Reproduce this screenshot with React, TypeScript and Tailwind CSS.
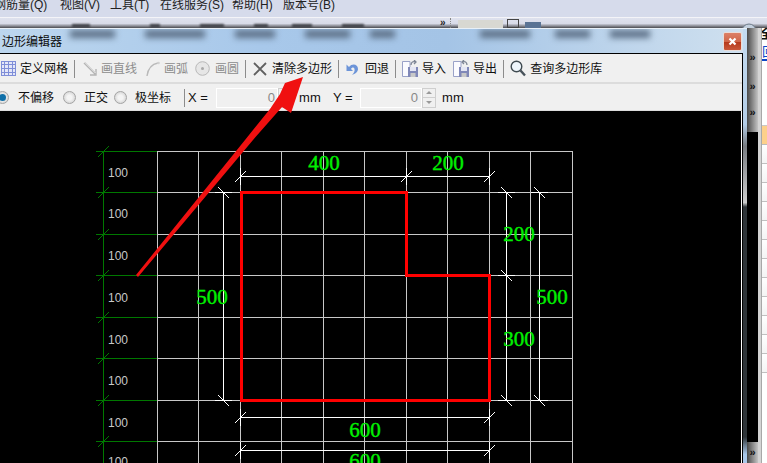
const cjk = "font-['Liberation_Sans','Noto_Sans_CJK_SC',sans-serif]"

const Sep = ({ className }: { className: string }) => <div className={`w-px h-[18px] bg-[#8c8c8c] ${className}`} />

const GridIcon = () => (
    <svg width="15" height="15" viewBox="0 0 15 15" className="shrink-0" shapeRendering="crispEdges">
        <rect x="0" y="0" width="15" height="15" fill="#e4e7f8" />
        {[0.5, 3.5, 7.5, 11.5, 14.5].map((p) => (
            <g key={p} stroke="#7f8ed8">
                <line x1={p} y1="0" x2={p} y2="15" />
                <line x1="0" y1={p} x2="15" y2={p} />
            </g>
        ))}
    </svg>
)

const LineIcon = () => (
    <svg width="14" height="16" viewBox="0 0 14 16" className="shrink-0 ml-[8px]">
        <path d="M1 2 L12 13 M7 14 H13 V8" fill="none" stroke="#b4b4b4" strokeWidth="1.4" />
        <path d="M2 1 L13 12" stroke="#d8d8d8" strokeWidth="1" />
    </svg>
)

const ArcIcon = () => (
    <svg width="14" height="16" viewBox="0 0 14 16" className="shrink-0 ml-[9px]">
        <path d="M1 15 C2 8 6 3 12 2" fill="none" stroke="#b9b9b9" strokeWidth="1.4" />
        <circle cx="12.5" cy="2" r="1.3" fill="#d0d0d0" />
    </svg>
)

const CircleIcon = () => (
    <svg width="15" height="15" viewBox="0 0 15 15" className="shrink-0 ml-[7px]">
        <circle cx="7.5" cy="7.5" r="6.8" fill="#e6e6e6" stroke="#b8b8b8" />
        <circle cx="7.5" cy="7.5" r="1.5" fill="#a8a8a8" />
    </svg>
)

const CrossIcon = () => (
    <svg width="14" height="14" viewBox="0 0 14 14" className="shrink-0 ml-[7px]">
        <path d="M1 1 L13 13 M13 1 L1 13" stroke="#606060" strokeWidth="1.8" />
    </svg>
)

const UndoIcon = () => (
    <svg width="13" height="14" viewBox="0 0 13 14" className="shrink-0 ml-[7px]">
        <path d="M3 5 C6 1 12 2 12 7 C12 10 9 12 6 13 C8 11 9 9 8.5 7 C8 5 6 5 5 7 L7 9 L0.5 9 L0.5 2.5 Z" fill="#6c94d8" />
    </svg>
)

const DiskIcon = ({ className, arrow }: { className: string; arrow: string }) => (
    <svg width="16" height="17" viewBox="0 0 16 17" className={`shrink-0 ${className}`}>
        <path d="M0.5 1.5 H8 L8 16.5 H0.5 Z" fill="#fbfbff" stroke="#9aa2c8" />
        <rect x="6" y="7" width="10" height="10" fill="#8088b8" />
        <rect x="8" y="7" width="6" height="4" fill="#e4e6f4" />
        <rect x="8.5" y="13" width="5" height="4" fill="#c8c8c8" />
        <path d={arrow} fill="none" stroke="#7c8494" strokeWidth="1.3" />
    </svg>
)

const SearchIcon = () => (
    <svg width="16" height="17" viewBox="0 0 16 17" className="shrink-0 ml-[6px]">
        <circle cx="6.5" cy="6.5" r="5.3" fill="#eef5fb" stroke="#3f4a50" strokeWidth="1.4" />
        <path d="M10.5 10.5 L15 15.5" stroke="#47525a" strokeWidth="2.4" />
    </svg>
)

const Radio = ({ className, on }: { className: string; on?: boolean }) => (
    <div className={`w-[13px] h-[13px] shrink-0 rounded-full border border-[#a4a4a4] flex items-center justify-center bg-[radial-gradient(circle,#f4f4f4_30%,#c8c8c8_100%)] ${className}`}>
        {on && <div className="w-[7px] h-[7px] rounded-full bg-[#0f6fa8]" />}
    </div>
)

const Spin = () => (
    <div className="w-[14px] h-[20px] shrink-0 flex flex-col border border-[#cfcfcf] bg-[#f0f0f0]">
        <div className="flex-1 flex items-center justify-center border-b border-[#cfcfcf]">
            <div className="border-x-[3px] border-x-transparent border-b-[3px] border-b-[#9a9a9a]" />
        </div>
        <div className="flex-1 flex items-center justify-center">
            <div className="border-x-[3px] border-x-transparent border-t-[3px] border-t-[#9a9a9a]" />
        </div>
    </div>
)

const gridX = [157, 198, 240, 281, 323, 364, 406, 447, 489, 530, 572]
const gridY = [151, 192, 234, 275, 317, 358, 400, 441]
const rowLabels = [177, 218, 260, 302, 344, 385, 427, 466]

const dimLabels = [
    { t: '400', x: 324, y: 170 },
    { t: '200', x: 448, y: 170 },
    { t: '200', x: 519, y: 241 },
    { t: '500', x: 212, y: 304 },
    { t: '500', x: 552, y: 304 },
    { t: '300', x: 519, y: 346 },
    { t: '600', x: 365, y: 437 },
    { t: '600', x: 365, y: 468 },
]

const slashTicks = [[240, 176], [406, 176], [489, 176], [240, 417], [489, 417], [240, 450], [489, 450]]
const backTicks = [[223, 192], [223, 400], [506, 192], [506, 275], [506, 400], [539, 192], [539, 400]]

const Canvas = () => (
    <svg width="741" height="352" viewBox="0 111 741 352" className="block bg-black">
        <g shapeRendering="crispEdges" strokeWidth="1">
            {gridX.map((x) => <line key={x} x1={x + 0.5} y1="151" x2={x + 0.5} y2="463" stroke="#c8c8c8" />)}
            {gridY.map((y) => (
                <g key={y}>
                    <line x1="157" y1={y + 0.5} x2="573" y2={y + 0.5} stroke="#c8c8c8" />
                    <line x1="96" y1={y + 0.5} x2="157" y2={y + 0.5} stroke="#007800" />
                </g>
            ))}
            <line x1="103.5" y1="151" x2="103.5" y2="463" stroke="#007800" />
            <line x1="223.5" y1="192" x2="223.5" y2="400" stroke="#fff" />
            <line x1="506.5" y1="192" x2="506.5" y2="400" stroke="#fff" />
            <line x1="539.5" y1="192" x2="539.5" y2="400" stroke="#fff" />
            <line x1="240" y1="176.5" x2="489" y2="176.5" stroke="#fff" />
            <line x1="240" y1="417.5" x2="489" y2="417.5" stroke="#fff" />
            <line x1="240" y1="450.5" x2="489" y2="450.5" stroke="#fff" />
            {backTicks.map(([x, y]) => <line key={`${x}-${y}`} x1={x - 8} y1={y + 0.5} x2={x + 9} y2={y + 0.5} stroke="#fff" />)}
            {slashTicks.map(([x, y]) => <line key={`${x}-${y}`} x1={x + 0.5} y1={y - 8} x2={x + 0.5} y2={y + 9} stroke="#fff" />)}
        </g>
        {gridY.map((y) => <line key={y} x1="98" y1={y + 6} x2="109" y2={y - 5} stroke="#007800" />)}
        {slashTicks.map(([x, y]) => <line key={`${x}-${y}`} x1={x - 5} y1={y + 6} x2={x + 6} y2={y - 5} stroke="#fff" />)}
        {backTicks.map(([x, y]) => <line key={`${x}-${y}`} x1={x - 5} y1={y - 5} x2={x + 6} y2={y + 6} stroke="#fff" />)}
        <path d="M241 192.5 H406.5 V275 H489.5 V400.5 H241 Z" fill="none" stroke="#ff0000" strokeWidth="3" shapeRendering="crispEdges" />
        {rowLabels.map((y) => (
            <text key={y} x="108" y={y} className="font-['Liberation_Sans',sans-serif] text-[12px] fill-[#c8c8c8]">100</text>
        ))}
        {dimLabels.map((d) => (
            <text key={`${d.t}-${d.x}-${d.y}`} x={d.x} y={d.y} textAnchor="middle" className="font-['Liberation_Serif',serif] text-[21px] fill-[#00f000] stroke-[#00f000] stroke-[0.4px]">{d.t}</text>
        ))}
    </svg>
)

const blobs = [
    'w-[45px] ml-[70px]', 'w-[60px] ml-[30px]', 'w-[40px] ml-[30px]', 'w-[45px] ml-[30px]',
    'w-[25px] ml-[20px]', 'w-[50px] ml-[85px]', 'w-[35px] ml-[25px]', 'w-[40px] ml-[20px]',
]

const stripBits = [
    'w-[18px] ml-[72px]', 'w-[10px] ml-[60px]', 'w-[24px] ml-[40px]', 'w-[14px] ml-[30px]',
    'w-[20px] ml-[24px]', 'w-[22px] ml-[30px]',
]

const SideButton = ({ className }: { className: string }) => (
    <div className={`bg-[linear-gradient(90deg,#4a4a4a,#c4c4c4)] flex justify-center ${className}`}>»</div>
)

export default function App() {
    return (
        <div className={`relative w-[767px] h-[463px] overflow-hidden bg-[#d6dbeb] text-[12px] text-[#111] ${cjk}`}>
            {/* menu bar, cut off at the top of the shot */}
            <div className="h-[17px] flex items-center overflow-hidden text-[12px] leading-none pb-[7px] text-[#222]">
                <span className="-ml-[6px] w-[66px] shrink-0">钢筋量(Q)</span>
                <span className="w-[50px] shrink-0">视图(V)</span>
                <span className="w-[50px] shrink-0">工具(T)</span>
                <span className="w-[72px] shrink-0">在线服务(S)</span>
                <span className="w-[51px] shrink-0">帮助(H)</span>
                <span className="shrink-0">版本号(B)</span>
            </div>
            <div className="relative h-[11px] border-t border-t-[#f4f4f8] bg-[linear-gradient(#dfe2ee_0%,#d8dbe8_55%,#4a4b50_100%)] flex items-end overflow-hidden">
                <div className="absolute left-0 bottom-0 flex blur-[1px]">
                    {stripBits.map((b) => <div key={b} className={`h-[4px] shrink-0 bg-[#44464c] ${b}`} />)}
                </div>
                <div className="ml-[440px] text-[10px] leading-[10px] font-bold text-[#222]">»</div>
                <div className="ml-[4px] w-[3px] h-[10px] border-l border-dotted border-[#888]" />
                <div className="ml-[5px] w-[45px] h-[8px] bg-[#d8d8d2]" />
                <div className="ml-[4px] w-[12px] h-[9px] border border-[#444]" />
                <div className="ml-[6px] w-[16px] h-[6px] bg-[#5a7394]" />
            </div>
            <svg width="16" height="16" className="absolute left-[741px] top-[23px]" viewBox="0 0 16 16">
                <circle cx="8" cy="8" r="7" fill="#c4d0de" stroke="#6d7a88" />
            </svg>

            <div className="relative flex h-[435px]">
                {/* dialog window */}
                <div className="w-[747px] shrink-0 flex flex-col pr-[4px] bg-[linear-gradient(#c4dcf2_0%,#b4cde6_22%,#777b80_27%,#cccccc_40%,#2e3438_41%,#2e3438_94%,#a9c8ea_98%)] border-t border-t-[#e8f0f8]">
                    <div className="relative h-[24px] shrink-0 overflow-hidden bg-[linear-gradient(90deg,#bcd6ee_0%,#a8c8ea_35%,#a4c4e6_60%,#cfe0ef_100%)]">
                        <div className="flex pt-[1px] blur-[3px]">
                            {blobs.map((b) => <div key={b} className={`h-[8px] shrink-0 bg-[#5d7188] ${b}`} />)}
                        </div>
                        <div className="absolute left-[2px] top-[5px] leading-[16px] text-[#0c0c0c]">边形编辑器</div>
                        <div className="absolute left-[723px] top-[3px] w-[19px] h-[19px] rounded-[2px] border border-[#e9dcd8] bg-[linear-gradient(#dd8067_0%,#d0674a_50%,#b63a1c_55%,#c9583a_100%)] flex items-center justify-center">
                            <svg width="9" height="9" viewBox="0 0 9 9">
                                <path d="M1.5 1.5 L7.5 7.5 M7.5 1.5 L1.5 7.5" stroke="#fff" strokeWidth="2.2" />
                            </svg>
                        </div>
                    </div>
                    <div className="flex-1 min-h-0 flex flex-col border-t border-r border-black">
                        <div className="h-[28px] shrink-0 bg-[#f0f0f0] flex items-center pl-[1px] pt-[1px]">
                            <GridIcon />
                            <span className="ml-[4px]">定义网格</span>
                            <Sep className="ml-[6px]" />
                            <LineIcon />
                            <span className="ml-[4px] text-[#8c8c8c]">画直线</span>
                            <ArcIcon />
                            <span className="ml-[4px] text-[#8c8c8c]">画弧</span>
                            <CircleIcon />
                            <span className="ml-[5px] text-[#8c8c8c]">画圆</span>
                            <Sep className="ml-[6px]" />
                            <CrossIcon />
                            <span className="ml-[5px]">清除多边形</span>
                            <Sep className="ml-[6px]" />
                            <UndoIcon />
                            <span className="ml-[6px]">回退</span>
                            <Sep className="ml-[6px]" />
                            <DiskIcon className="ml-[6px]" arrow="M9 5 C9 2 11 1 14 2 M12 0 L14 2 L12 4" />
                            <span className="ml-[4px]">导入</span>
                            <DiskIcon className="ml-[7px]" arrow="M14 5 C14 2 12 1 9 2 M11 0 L9 2 L11 4" />
                            <span className="ml-[4px]">导出</span>
                            <Sep className="ml-[6px]" />
                            <SearchIcon />
                            <span className="ml-[4px]">查询多边形库</span>
                        </div>
                        <div className="h-[2px] shrink-0 bg-[#dcdcdc]" />
                        <div className="h-[27px] shrink-0 bg-[#f0f0f0] flex items-center border-b border-[#dcdcdc] pt-[1px]">
                            <Radio className="-ml-[4px]" on />
                            <span className="ml-[9px]">不偏移</span>
                            <Radio className="ml-[9px]" />
                            <span className="ml-[8px]">正交</span>
                            <Radio className="ml-[6px]" />
                            <span className="ml-[8px]">极坐标</span>
                            <Sep className="ml-[13px]" />
                            <span className="ml-[3px] w-[20px] text-[13px]">X =</span>
                            <div className="ml-[8px] w-[62px] h-[20px] border border-white flex items-center justify-end pr-[2px] text-[13px] text-[#888]">0</div>
                            <Spin />
                            <span className="ml-[7px] w-[21px] text-[13px] whitespace-nowrap">mm</span>
                            <span className="ml-[13px] w-[20px] text-[13px]">Y =</span>
                            <div className="ml-[7px] w-[62px] h-[20px] border border-white flex items-center justify-end pr-[3px] text-[13px] text-[#888]">0</div>
                            <Spin />
                            <span className="ml-[6px] text-[13px]">mm</span>
                        </div>
                        <div className="flex-1 min-h-0 bg-black overflow-hidden border-r border-white">
                            <Canvas />
                        </div>
                    </div>
                </div>

                {/* docked panels behind the dialog */}
                <div className="flex-1 min-w-0 flex">
                    <div className="w-[11px] shrink-0 flex flex-col bg-black text-[11px] leading-none font-bold text-[#111]">
                        <SideButton className="h-[44px] items-end pb-[9px]" />
                        <SideButton className="h-[28px] items-center" />
                        <SideButton className="h-[32px] items-center pb-[8px]" />
                        <div className="flex-1" />
                        <SideButton className="h-[21px] items-center" />
                    </div>
                    <div className="w-[4px] shrink-0 bg-[#d4d4d4] border-r border-[#a8a8a8]" />
                    <div className="flex-1 min-w-0 overflow-hidden bg-white">
                        <div className="h-[16px] whitespace-nowrap text-[13px] leading-[12px] font-bold -ml-[2px]">全</div>
                        <div className="h-[17px] text-[13px] leading-[16px] text-[#0b46c8] whitespace-nowrap border-b-2 border-[#0b46c8]">回</div>
                        <div className="h-[65px] border-b border-[#c8c8c8]" />
                        <div className="h-[19px] bg-[#fdd08a] border-b border-[#bbb]" />
                        {[0, 1, 2, 3, 4, 5, 6, 7, 8, 9, 10, 11].map((i) => (
                            <div key={i} className="h-[19px] border-b border-[#c0c0c0] bg-[linear-gradient(#ffffff,#f4f4f4)]" />
                        ))}
                    </div>
                </div>
            </div>

            {/* hand-drawn annotation arrow lying over the dialog */}
            <svg width="767" height="463" className="absolute left-0 top-0 pointer-events-none">
                <path d="M136 275 L245 140 L270 109 L280 94 L285 83 L303 77 L291 113 L282 107 L253 140 L138 277 Z" fill="#f01010" />
            </svg>
        </div>
    )
}
